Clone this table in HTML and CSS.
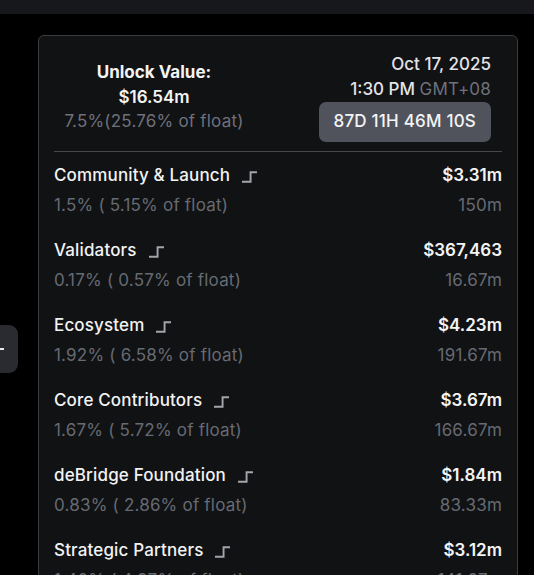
FILE: index.html
```html
<!DOCTYPE html>
<html lang="en">
<head>
<meta charset="utf-8">
<title>Unlock schedule</title>
<link rel="stylesheet" href="styles.css">
</head>
<body>
<div class="topbar"></div>
<main class="stage">
  <button class="side-btn" aria-label="Collapse"><span class="side-mark"></span></button>
  <section class="card">
    <header class="head">
      <div class="head-left">
        <div class="h-title">Unlock Value:</div>
        <div class="h-value">$16.54m</div>
        <div class="h-sub">7.5%(25.76% of float)</div>
      </div>
      <div class="head-right">
        <div class="date">Oct 17, 2025</div>
        <div class="time">1:30 PM <span class="tz">GMT+08</span></div>
        <div class="countdown">87D 11H 46M 10S</div>
      </div>
    </header>
    <ul class="rows">
      <li class="row">
        <div class="name">Community &amp; Launch<svg class="step" viewBox="0 0 14 11"><path d="M0 10H8V1H14"/></svg></div>
        <div class="amt">$3.31m</div>
        <div class="pct">1.5% ( 5.15% of float)</div>
        <div class="tok">150m</div>
      </li>
      <li class="row">
        <div class="name">Validators<svg class="step" viewBox="0 0 14 11"><path d="M0 10H8V1H14"/></svg></div>
        <div class="amt">$367,463</div>
        <div class="pct">0.17% ( 0.57% of float)</div>
        <div class="tok">16.67m</div>
      </li>
      <li class="row">
        <div class="name">Ecosystem<svg class="step" viewBox="0 0 14 11"><path d="M0 10H8V1H14"/></svg></div>
        <div class="amt">$4.23m</div>
        <div class="pct">1.92% ( 6.58% of float)</div>
        <div class="tok">191.67m</div>
      </li>
      <li class="row">
        <div class="name">Core Contributors<svg class="step" viewBox="0 0 14 11"><path d="M0 10H8V1H14"/></svg></div>
        <div class="amt">$3.67m</div>
        <div class="pct">1.67% ( 5.72% of float)</div>
        <div class="tok">166.67m</div>
      </li>
      <li class="row">
        <div class="name">deBridge Foundation<svg class="step" viewBox="0 0 14 11"><path d="M0 10H8V1H14"/></svg></div>
        <div class="amt">$1.84m</div>
        <div class="pct">0.83% ( 2.86% of float)</div>
        <div class="tok">83.33m</div>
      </li>
      <li class="row">
        <div class="name">Strategic Partners<svg class="step" viewBox="0 0 14 11"><path d="M0 10H8V1H14"/></svg></div>
        <div class="amt">$3.12m</div>
        <div class="pct">1.40% ( 4.87% of float)</div>
        <div class="tok">141.67m</div>
      </li>
    </ul>
  </section>
</main>
</body>
</html>
```
FILE: styles.css
```css
* { box-sizing: border-box; }
html, body {
  margin: 0;
  padding: 0;
  height: 100%;
  overflow: hidden;
  background: #000;
  font-family: Inter, "Noto Sans", "Liberation Sans", sans-serif;
  font-size: 17px;
  line-height: 25px;
  color: #f2f2f3;
}
.topbar {
  height: 14px;
  background: #17181b;
}
.stage {
  position: relative;
  padding: 21px 16px 0 38px;
}
.side-btn {
  position: absolute;
  left: -30px;
  top: 311px;
  width: 48px;
  height: 48px;
  border: 0;
  border-radius: 9px;
  background: #2a2b30;
  padding: 0;
}
.side-mark {
  position: absolute;
  right: 14px;
  top: 23px;
  width: 4px;
  height: 2px;
  background: #e8e8ea;
}
.card {
  width: 480px;
  height: 620px;
  background: #111214;
  border: 1px solid #3b3c40;
  border-radius: 6px;
  padding: 16px 15px 0 15px;
}
.head {
  display: flex;
  justify-content: space-between;
  align-items: center;
  padding-bottom: 9px;
  border-bottom: 1px solid #46474c;
}
.head-left {
  width: 200px;
  text-align: center;
  line-height: 24.5px;
}
.h-title { font-weight: 700; color: #f4f4f5; }
.h-value { font-weight: 600; color: #f4f4f5; }
.h-sub { color: #6e717b; letter-spacing: 0.2px; }
.head-right {
  display: flex;
  flex-direction: column;
  align-items: flex-end;
  text-align: right;
  margin-right: 11px;
}
.date { color: #e3e3e6; font-weight: 500; }
.time { color: #e3e3e6; font-weight: 500; }
.tz { color: #6e717b; font-weight: 400; letter-spacing: 0.2px; }
.countdown {
  background: #50535c;
  color: #f4f4f5;
  border-radius: 7px;
  padding: 7px 15px 8px;
  font-weight: 500;
  letter-spacing: 0.2px;
}
.rows {
  list-style: none;
  margin: 0;
  padding: 11px 0 0 0;
  display: flex;
  flex-direction: column;
  gap: 20px;
}
.row {
  display: grid;
  grid-template-columns: 1fr auto;
  row-gap: 5px;
}
.name {
  display: flex;
  align-items: center;
  font-weight: 500;
  color: #f2f2f3;
  letter-spacing: 0.15px;
}
.step {
  width: 15px;
  height: 12px;
  margin-left: 12px;
  margin-top: 2px;
  fill: none;
  stroke: #a3a5ab;
  stroke-width: 1.8;
}
.amt {
  text-align: right;
  font-weight: 600;
  color: #f4f4f5;
}
.pct { color: #666a73; letter-spacing: 0.2px; }
.tok { color: #666a73; text-align: right; letter-spacing: 0.2px; }
```
